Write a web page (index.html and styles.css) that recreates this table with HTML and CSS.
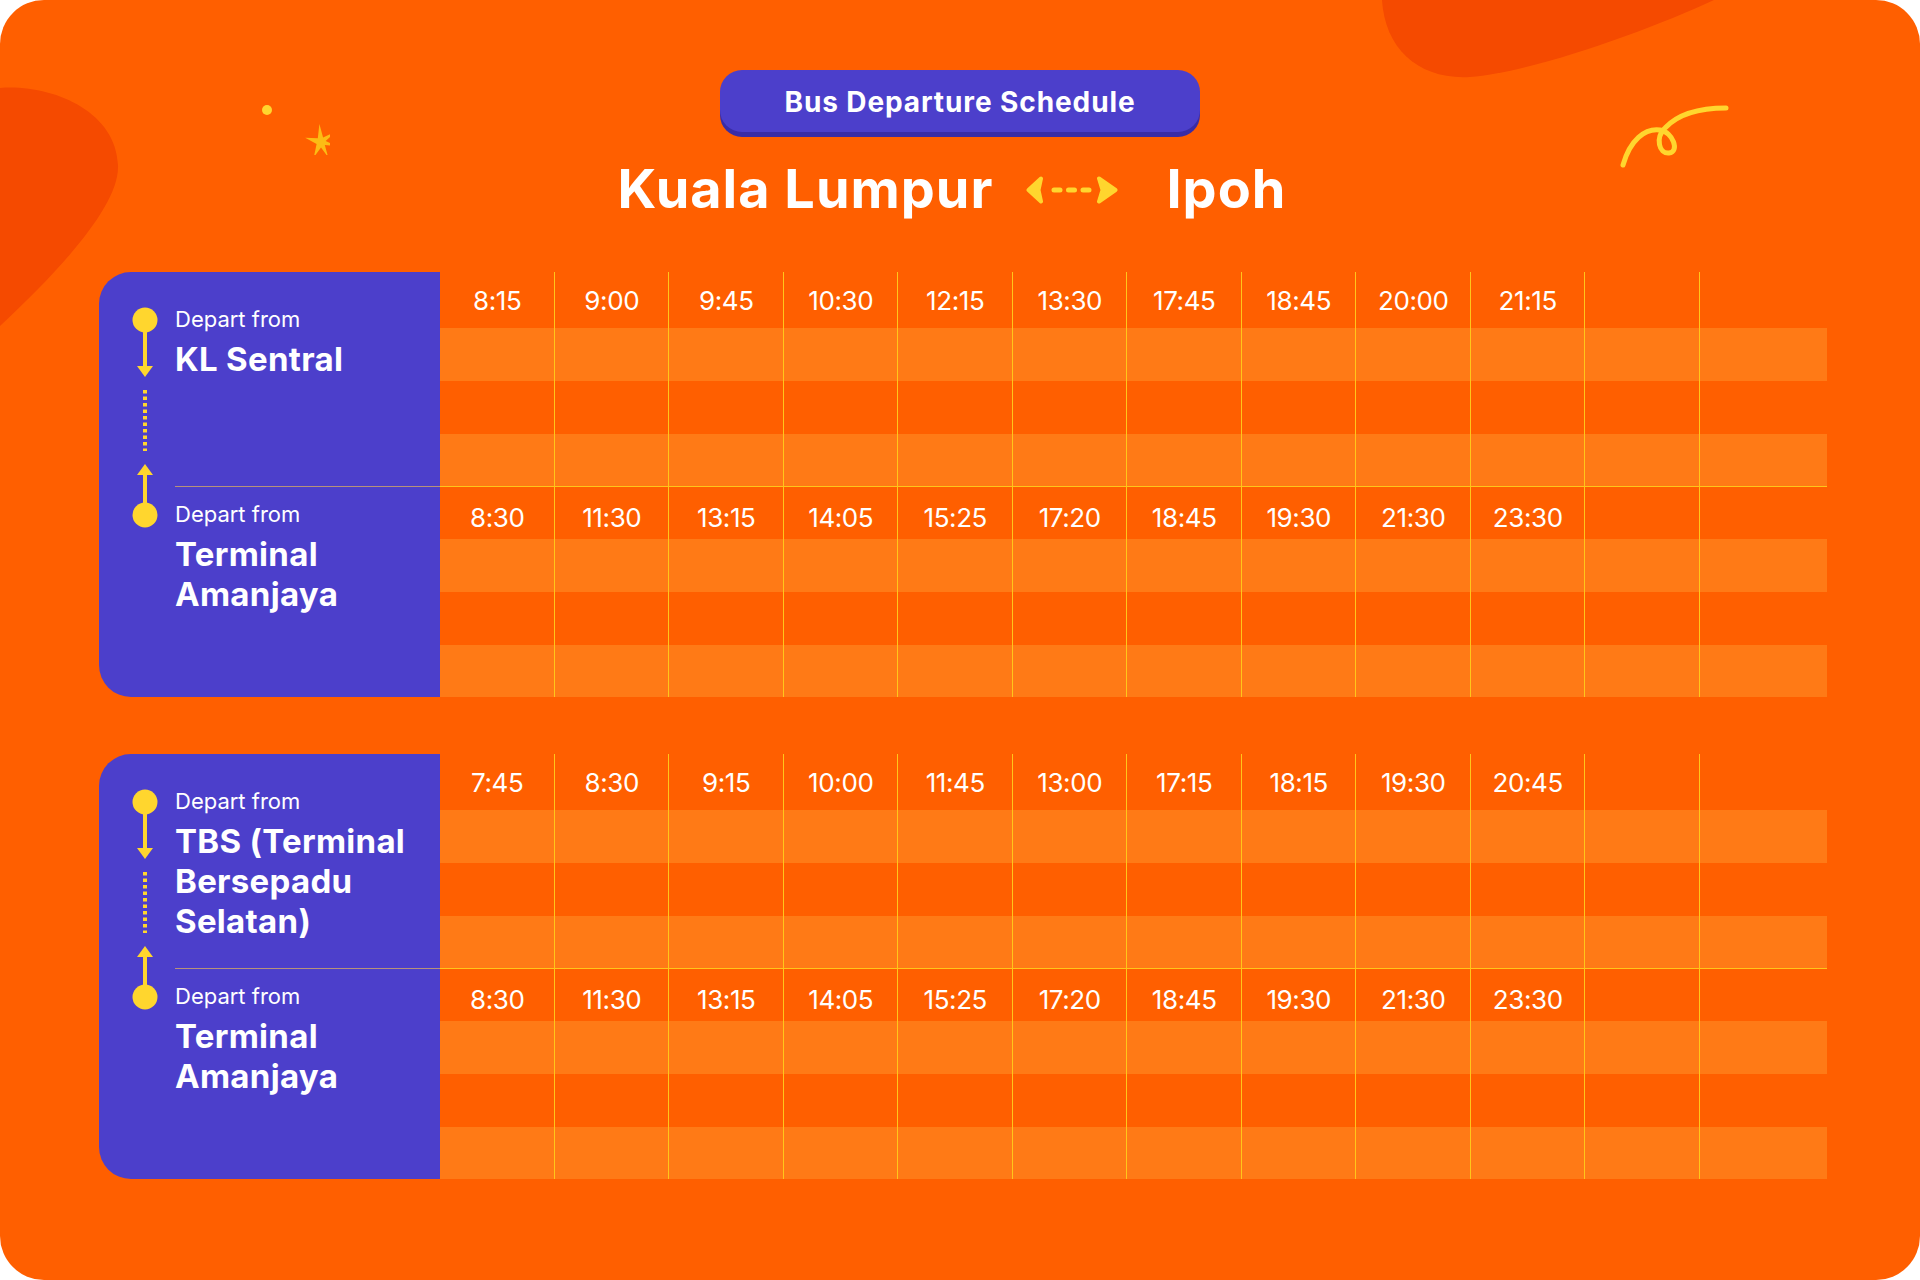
FILE: index.html
```html
<!DOCTYPE html>
<html lang="en">
<head>
<meta charset="utf-8">
<title>Bus Departure Schedule</title>
<link rel="stylesheet" href="styles.css">
</head>
<body>
<div class="card">
  <svg class="deco blob-left" width="130" height="340" viewBox="0 0 130 340"><path d="M0 88 C50 84 116 110 118 165 C120 205 60 270 0 326 Z"/></svg>
  <svg class="deco blob-top" width="340" height="90" viewBox="1380 0 340 90"><path d="M1382 0 C1385 50 1420 80 1470 77 C1530 73 1650 30 1714 0 Z"/></svg>
  <svg class="deco sparkle" width="80" height="60" viewBox="250 95 80 60">
    <circle cx="267" cy="110" r="5" fill="#ffd62e"/>
    <polygon points="319.4,124.1 323.1,137.4 335.7,131.7 325.7,141.1 338.4,146.4 324.8,145.0 328.2,157.3 321,147.5 313.8,157.3 316.6,144.1 305.2,137.7 317.8,138.2" fill="#fcbb14"/>
  </svg>
  <svg class="deco squiggle" width="130" height="80" viewBox="1610 95 130 80"><path d="M1623 165 C1630 140 1645 128 1660 130 C1673 132 1680 152 1669 153 C1659 154 1655 138 1665 128 C1678 114 1700 108 1726 108" fill="none" stroke="#ffd62e" stroke-width="5" stroke-linecap="round"/></svg>

  <header class="head">
    <div class="pill">Bus Departure Schedule</div>
    <h1 class="title">
      <span class="city">Kuala Lumpur</span>
      <svg class="swap" width="92" height="28" viewBox="0 0 92 28">
        <path d="M2.5 14 L15 2.5 L12.5 14 L15 25.5 Z" fill="#ffd62e" stroke="#ffd62e" stroke-width="4" stroke-linejoin="round"/>
        <path d="M28 14 H34 M42.5 14 H48.5 M57 14 H63" stroke="#ffd62e" stroke-width="5" stroke-linecap="round"/>
        <path d="M89.5 14 L73 2.5 L76.5 14 L73 25.5 Z" fill="#ffd62e" stroke="#ffd62e" stroke-width="4" stroke-linejoin="round"/>
      </svg>
      <span class="city">Ipoh</span>
    </h1>
  </header>

  <main class="panels">
    <section class="panel">
      <div class="stations">
        <svg class="route" width="76" height="425" viewBox="0 0 76 425">
          <circle cx="46" cy="48" r="12.5" fill="#ffd62e"/>
          <path d="M46 50 V96" stroke="#ffd62e" stroke-width="4"/>
          <path d="M38 94 L54 94 L46 105 Z" fill="#ffd62e"/>
          <path d="M46 118 V179" stroke="#ffd62e" stroke-width="4" stroke-dasharray="3.5 3"/>
          <path d="M46 192 L54 203 L38 203 Z" fill="#ffd62e"/>
          <path d="M46 201 V241" stroke="#ffd62e" stroke-width="4"/>
          <circle cx="46" cy="243" r="12.5" fill="#ffd62e"/>
        </svg>
        <div class="stops">
          <div class="stop stop-first">
            <div class="from">Depart from</div>
            <div class="name">KL Sentral</div>
          </div>
          <div class="stop stop-second">
            <div class="from">Depart from</div>
            <div class="name">Terminal Amanjaya</div>
          </div>
        </div>
      </div>
      <div class="grid">
        <div class="half half-first">
          <div class="col">8:15</div><div class="col">9:00</div><div class="col">9:45</div><div class="col">10:30</div><div class="col">12:15</div><div class="col">13:30</div><div class="col">17:45</div><div class="col">18:45</div><div class="col">20:00</div><div class="col">21:15</div><div class="col"></div><div class="col col-last"></div>
        </div>
        <div class="half half-second">
          <div class="col">8:30</div><div class="col">11:30</div><div class="col">13:15</div><div class="col">14:05</div><div class="col">15:25</div><div class="col">17:20</div><div class="col">18:45</div><div class="col">19:30</div><div class="col">21:30</div><div class="col">23:30</div><div class="col"></div><div class="col col-last"></div>
        </div>
      </div>
    </section>

    <section class="panel">
      <div class="stations">
        <svg class="route" width="76" height="425" viewBox="0 0 76 425">
          <circle cx="46" cy="48" r="12.5" fill="#ffd62e"/>
          <path d="M46 50 V96" stroke="#ffd62e" stroke-width="4"/>
          <path d="M38 94 L54 94 L46 105 Z" fill="#ffd62e"/>
          <path d="M46 118 V179" stroke="#ffd62e" stroke-width="4" stroke-dasharray="3.5 3"/>
          <path d="M46 192 L54 203 L38 203 Z" fill="#ffd62e"/>
          <path d="M46 201 V241" stroke="#ffd62e" stroke-width="4"/>
          <circle cx="46" cy="243" r="12.5" fill="#ffd62e"/>
        </svg>
        <div class="stops">
          <div class="stop stop-first">
            <div class="from">Depart from</div>
            <div class="name">TBS (Terminal Bersepadu Selatan)</div>
          </div>
          <div class="stop stop-second">
            <div class="from">Depart from</div>
            <div class="name">Terminal Amanjaya</div>
          </div>
        </div>
      </div>
      <div class="grid">
        <div class="half half-first">
          <div class="col">7:45</div><div class="col">8:30</div><div class="col">9:15</div><div class="col">10:00</div><div class="col">11:45</div><div class="col">13:00</div><div class="col">17:15</div><div class="col">18:15</div><div class="col">19:30</div><div class="col">20:45</div><div class="col"></div><div class="col col-last"></div>
        </div>
        <div class="half half-second">
          <div class="col">8:30</div><div class="col">11:30</div><div class="col">13:15</div><div class="col">14:05</div><div class="col">15:25</div><div class="col">17:20</div><div class="col">18:45</div><div class="col">19:30</div><div class="col">21:30</div><div class="col">23:30</div><div class="col"></div><div class="col col-last"></div>
        </div>
      </div>
    </section>
  </main>
</div>
</body>
</html>
```

FILE: styles.css
```css
* { box-sizing: border-box; }

html, body {
  margin: 0;
  padding: 0;
  background: #ffffff;
}

body {
  font-family: "Inter", "Noto Sans", "Liberation Sans", sans-serif;
  color: #ffffff;
}

.card {
  position: relative;
  width: 1920px;
  height: 1280px;
  background: #ff5f00;
  border-radius: 44px;
  overflow: hidden;
  padding-top: 70px;
}

.deco {
  position: absolute;
  display: block;
}

.deco path { fill: #f54a00; }
.deco.squiggle path { fill: none; }

.blob-left { left: 0; top: 0; }
.blob-top { left: 1380px; top: 0; }
.sparkle { left: 250px; top: 95px; }
.squiggle { left: 1610px; top: 95px; }

.head {
  position: relative;
  display: flex;
  flex-direction: column;
  align-items: center;
}

.pill {
  width: 480px;
  height: 62px;
  border-radius: 22px;
  background: #4c3fcb;
  box-shadow: 0 5px 0 #3a2ca6;
  display: flex;
  align-items: center;
  justify-content: center;
  font-size: 28px;
  font-weight: 700;
  letter-spacing: 0.9px;
  padding-top: 1px;
}

.title {
  margin: 25px 0 0;
  display: flex;
  align-items: center;
  height: 64px;
  font-size: 54px;
  font-weight: 700;
  line-height: 64px;
  letter-spacing: 1px;
  padding-right: 16px;
}

.swap {
  display: block;
  margin: 2px 48px 0 33px;
}

.panels {
  position: relative;
  margin: 51px 0 0 99px;
  width: 1728px;
  display: flex;
  flex-direction: column;
  gap: 57px;
}

.panel {
  display: flex;
  height: 425px;
}

.stations {
  width: 341px;
  flex: none;
  display: flex;
  background: #4c3fcb;
  border-radius: 32px 0 0 32px;
}

.route {
  display: block;
  flex: none;
}

.stops {
  flex: 1;
  display: flex;
  flex-direction: column;
}

.stop {
  padding-right: 4px;
}

.stop-first {
  height: 214px;
  padding-top: 33px;
}

.stop-second {
  flex: 1;
  border-top: 1px solid rgba(240, 190, 80, 0.65);
  padding-top: 13px;
}

.from {
  font-size: 22px;
  line-height: 28px;
  font-weight: 400;
  letter-spacing: 0;
}

.name {
  margin-top: 6px;
  font-size: 33px;
  line-height: 40px;
  font-weight: 700;
  letter-spacing: 0.3px;
}

.grid {
  flex: 1;
  display: flex;
  flex-direction: column;
}

.half {
  display: grid;
  grid-template-columns: repeat(11, 114.5px) 1fr;
}

.half-first {
  height: 214px;
  background: linear-gradient(to bottom,
    transparent 0 56px, #ff7a16 56px 109px,
    transparent 109px 162px, #ff7a16 162px 214px);
}

.half-second {
  height: 211px;
  border-top: 1px solid #ffc61a;
  background: linear-gradient(to bottom,
    transparent 0 52px, #ff7a16 52px 105px,
    transparent 105px 158px, #ff7a16 158px 210px);
}

.col {
  border-right: 1px solid #ffc61a;
  text-align: center;
  font-size: 26px;
  font-weight: 400;
  letter-spacing: -0.4px;
  line-height: 58px;
  padding-left: 1px;
}

.half-second .col {
  line-height: 61px;
}

.col-last {
  border-right: none;
}
```
